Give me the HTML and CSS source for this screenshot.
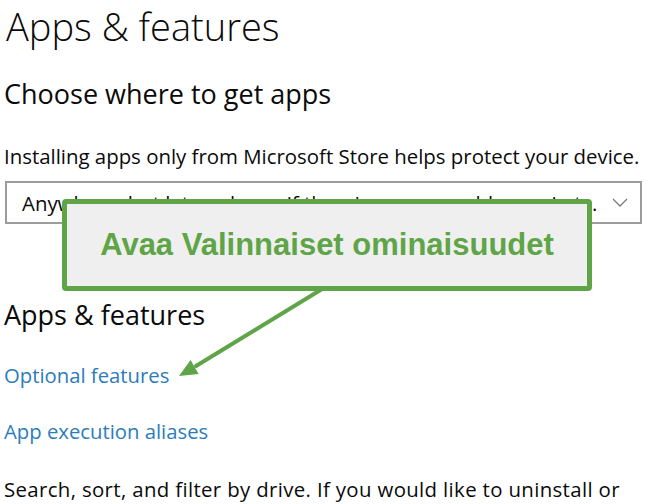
FILE: index.html
```html
<!DOCTYPE html>
<html lang="en">
<head>
<meta charset="utf-8">
<title>Apps &amp; features</title>
<link rel="stylesheet" href="styles.css">
</head>
<body>
<main class="page">
  <h1 class="title">Apps &amp; features</h1>
  <h2 class="subtitle choose">Choose where to get apps</h2>
  <p class="body-text install">Installing apps only from Microsoft Store helps protect your device.</p>
  <div class="select">
    <span class="select-text">Anywhere, but let me know if there's a comparable app in the Microsoft Store</span>
    <svg class="chevron" width="16" height="9" viewBox="0 0 16 9"><polyline points="1,1 8,8 15,1" fill="none" stroke="#7a7a7a" stroke-width="1.3"/></svg>
  </div>
  <h2 class="subtitle section">Apps &amp; features</h2>
  <a class="link first" href="#">Optional features</a>
  <a class="link second" href="#">App execution aliases</a>
  <p class="body-text search">Search, sort, and filter by drive. If you would like to uninstall or</p>
</main>
<svg class="arrow" width="650" height="504" viewBox="0 0 650 504">
  <line x1="327" y1="286" x2="196" y2="366" stroke="#5fa548" stroke-width="4" stroke-linecap="round"/>
  <polygon points="179,376 198.6,373.9 190.6,360.1" fill="#5fa548"/>
</svg>
<div class="callout">Avaa Valinnaiset ominaisuudet</div>
</body>
</html>
```
FILE: styles.css
```css
html, body {
  margin: 0;
  padding: 0;
  background: #ffffff;
}
body {
  width: 650px;
  height: 504px;
  overflow: hidden;
  position: relative;
  font-family: "Open Sans", "Noto Sans", sans-serif;
  color: #0a0a0a;
}
.page {
  padding: 0 0 0 4px;
}
.title {
  margin: 0 0 0 2px;
  font-size: 38px;
  font-weight: 300;
  line-height: 52px;
}
.subtitle {
  margin: 0;
  font-size: 27px;
  font-weight: 400;
  line-height: 36px;
}
.choose {
  margin-top: 23.5px;
}
.section {
  margin-top: 72.5px;
}
.body-text {
  margin: 0;
  font-size: 20.4px;
  line-height: 28px;
  white-space: nowrap;
}
.install {
  margin-top: 30.5px;
}
.search {
  margin-top: 29.8px;
  letter-spacing: 0.35px;
}
.select {
  margin: 11px 0 0 1px;
  width: 637px;
  height: 43px;
  box-sizing: border-box;
  border: 2px solid #9c9c9c;
  display: flex;
  align-items: center;
  padding: 0 12px 0 15px;
}
.select-text {
  flex: 1;
  min-width: 0;
  font-size: 20.4px;
  line-height: 36px;
  padding-top: 2px;
  padding-bottom: 1px;
  white-space: nowrap;
  overflow: hidden;
  text-overflow: ellipsis;
  margin-right: 14px;
}
.chevron {
  flex: none;
}
.link {
  display: block;
  font-size: 20.3px;
  line-height: 28px;
  color: #2c7cba;
  text-decoration: none;
}
.link.first {
  margin-top: 28.7px;
}
.link.second {
  margin-top: 28px;
}
.arrow {
  position: absolute;
  left: 0;
  top: 0;
  pointer-events: none;
}
.callout {
  position: absolute;
  left: 62px;
  top: 199px;
  width: 530px;
  height: 92px;
  box-sizing: border-box;
  border: 5px solid #5fa548;
  border-radius: 4px;
  background: #efefef;
  display: flex;
  align-items: center;
  justify-content: center;
  font-family: "Liberation Sans", Arial, sans-serif;
  font-weight: 700;
  font-size: 31px;
  color: #5fa548;
}
```
